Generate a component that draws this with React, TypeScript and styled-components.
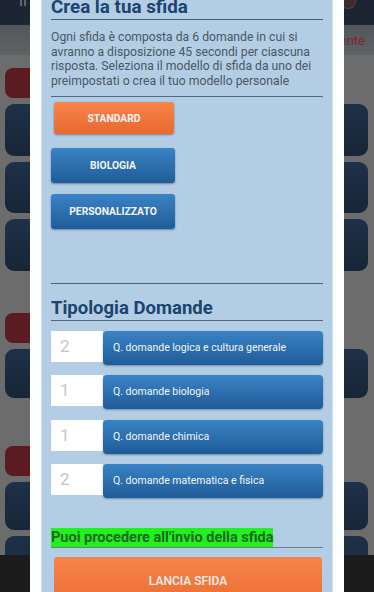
import React from "react";
import styled, { createGlobalStyle } from "styled-components";

const Global = createGlobalStyle`
  html, body { margin: 0; padding: 0; }
  body { width: 374px; height: 592px; overflow: hidden; font-family: Roboto, "Liberation Sans", sans-serif; }
  * { box-sizing: border-box; }
`;

const Screen = styled.div`
  position: relative;
  width: 374px;
  height: 592px;
  overflow: hidden;
  display: flex;
  flex-direction: column;
  background: #6c6c6c;
`;

const TopBar = styled.div`
  height: 25px;
  background: #1b2632;
  display: flex;
  align-items: flex-start;
  justify-content: space-between;
  padding: 0 18px 0 20px;
`;

const PauseIcon = styled.div`
  display: flex;
  gap: 2px;
  span { width: 2px; height: 6px; background: #5d6670; }
`;

const Emblem = styled.div`
  width: 16px;
  height: 9px;
  border-radius: 0 0 8px 8px;
  border: 1px solid #6b3a40;
  border-top: none;
  background: #3a2a32;
`;

const SubBar = styled.div`
  height: 30px;
  background: linear-gradient(#53575b, #5f6265);
  display: flex;
  align-items: center;
  justify-content: flex-end;
  padding-right: 9px;
  font-size: 13px;
  color: #7e2330;
`;

const Body = styled.div`
  flex: 1;
  display: flex;
  flex-direction: column;
  padding: 13px 6px 0 5px;
`;

const Section = styled.div<{ $top: number }>`
  display: flex;
  flex-direction: column;
  gap: 6px;
  margin-top: ${(p) => p.$top}px;
`;

const RedPill = styled.div`
  width: 110px;
  height: 30px;
  border-radius: 8px;
  background: #5a1c22;
`;

const Card = styled.div<{ $h: number }>`
  height: ${(p) => p.$h}px;
  border-radius: 9px;
  background: linear-gradient(#1d3148, #172637);
`;

const BottomBar = styled.div`
  position: absolute;
  left: 0;
  right: 0;
  bottom: 0;
  height: 37px;
  background: #1c1c1c;
`;

const Overlay = styled.div`
  position: absolute;
  inset: 0;
  display: flex;
  justify-content: center;
`;

const Frame = styled.div`
  width: 314px;
  height: 100%;
  background: #fdfefe;
  padding: 0 11px;
`;

const Panel = styled.div`
  height: 100%;
  background: #b3cde4;
  border-left: 1px solid #cfe0ee;
  border-right: 1px solid #cfe0ee;
  padding: 0 9px;
  display: grid;
  grid-template-columns: 100%;
  align-content: start;
`;

const Title = styled.h1`
  margin: 0;
  font-size: 18.8px;
  line-height: 15px;
  font-weight: 700;
  color: #1b4470;
  padding-bottom: 4px;
  border-bottom: 1px solid #41607e;
`;

const Intro = styled.p`
  margin: 10px 0 0;
  font-size: 12.2px;
  line-height: 14.5px;
  color: #4a5865;
  padding-bottom: 8px;
  border-bottom: 1px solid #4b6d8c;
`;

const Options = styled.div`
  display: flex;
  flex-direction: column;
  align-items: flex-start;
  margin-top: 5px;
  padding-bottom: 43px;
  border-bottom: 1px solid #3f6784;
`;

const OptionButton = styled.button<{ $active?: boolean }>`
  border: none;
  font-family: Roboto, "Liberation Sans", sans-serif;
  font-weight: 700;
  font-size: 10.3px;
  color: #f2f4f7;
  text-transform: uppercase;
  border-radius: 3px;
  width: ${(p) => (p.$active ? 120 : 124)}px;
  height: ${(p) => (p.$active ? 32 : 35)}px;
  margin: ${(p) => (p.$active ? "0 0 14px 3px" : "0 0 11px 0")};
  background: ${(p) =>
    p.$active
      ? "linear-gradient(#f7844a, #e9682f)"
      : "linear-gradient(#3a83c5, #1f5c98)"};
  box-shadow: 0 1px 2px rgba(20, 40, 70, 0.45);
  padding: 0;
`;

const Heading = styled.h2`
  margin: 13px 0 0;
  font-size: 18.5px;
  line-height: 22px;
  font-weight: 700;
  color: #1b4470;
  padding-bottom: 1px;
  border-bottom: 1px solid #56677a;
`;

const Rows = styled.div`
  display: flex;
  flex-direction: column;
  gap: 10.3px;
  margin-top: 10px;
`;

const Row = styled.div`
  display: flex;
  align-items: flex-start;
`;

const Count = styled.div`
  width: 52px;
  height: 31px;
  background: #ffffff;
  color: #c6c6c6;
  font-size: 17px;
  line-height: 31px;
  padding-left: 9px;
`;

const TypeButton = styled.div`
  flex: 1;
  height: 34px;
  border-radius: 4px;
  background: linear-gradient(#3a83c5, #1f5c98);
  box-shadow: 0 1px 2px rgba(20, 40, 70, 0.4);
  color: #f4f6f9;
  font-size: 10.5px;
  line-height: 34px;
  padding-left: 10px;
`;

const Status = styled.div`
  margin-top: 30px;
  border-bottom: 1px solid #6b7d8e;
  display: flex;
`;

const StatusText = styled.span`
  background: #22f01f;
  color: #1b6a1e;
  font-weight: 700;
  font-size: 14.5px;
  line-height: 19px;
  height: 19px;
`;

const LaunchButton = styled.div`
  margin: 9px 1px 0 3px;
  height: 48px;
  border-radius: 3px 3px 0 0;
  background: linear-gradient(#f7844a, #ec6d33);
  color: #f6f2ee;
  font-size: 12px;
  font-weight: 500;
  display: flex;
  align-items: center;
  justify-content: center;
`;

const types = [
  { n: 2, label: "Q. domande logica e cultura generale" },
  { n: 1, label: "Q. domande biologia" },
  { n: 1, label: "Q. domande chimica" },
  { n: 2, label: "Q. domande matematica e fisica" },
];

export default function App() {
  return (
    <>
      <Global />
      <Screen>
        <TopBar>
          <PauseIcon>
            <span />
            <span />
          </PauseIcon>
          <Emblem />
        </TopBar>
        <SubBar>ente</SubBar>
        <Body>
          <Section $top={0}>
            <RedPill />
            <Card $h={52} />
            <Card $h={51} />
            <Card $h={52} />
          </Section>
          <Section $top={42}>
            <RedPill />
            <Card $h={49} />
          </Section>
          <Section $top={48}>
            <RedPill />
            <Card $h={48} />
            <Card $h={48} />
          </Section>
        </Body>
        <BottomBar />
        <Overlay>
          <Frame>
            <Panel>
              <Title>Crea la tua sfida</Title>
              <Intro>
                Ogni sfida è composta da 6 domande in cui si avranno a disposizione 45 secondi per
                ciascuna risposta. Seleziona il modello di sfida da uno dei preimpostati o crea il
                tuo modello personale
              </Intro>
              <Options>
                <OptionButton $active>Standard</OptionButton>
                <OptionButton>Biologia</OptionButton>
                <OptionButton>Personalizzato</OptionButton>
              </Options>
              <Heading>Tipologia Domande</Heading>
              <Rows>
                {types.map((t) => (
                  <Row key={t.label}>
                    <Count>{t.n}</Count>
                    <TypeButton>{t.label}</TypeButton>
                  </Row>
                ))}
              </Rows>
              <Status>
                <StatusText>Puoi procedere all'invio della sfida</StatusText>
              </Status>
              <LaunchButton>LANCIA SFIDA</LaunchButton>
            </Panel>
          </Frame>
        </Overlay>
      </Screen>
    </>
  );
}
